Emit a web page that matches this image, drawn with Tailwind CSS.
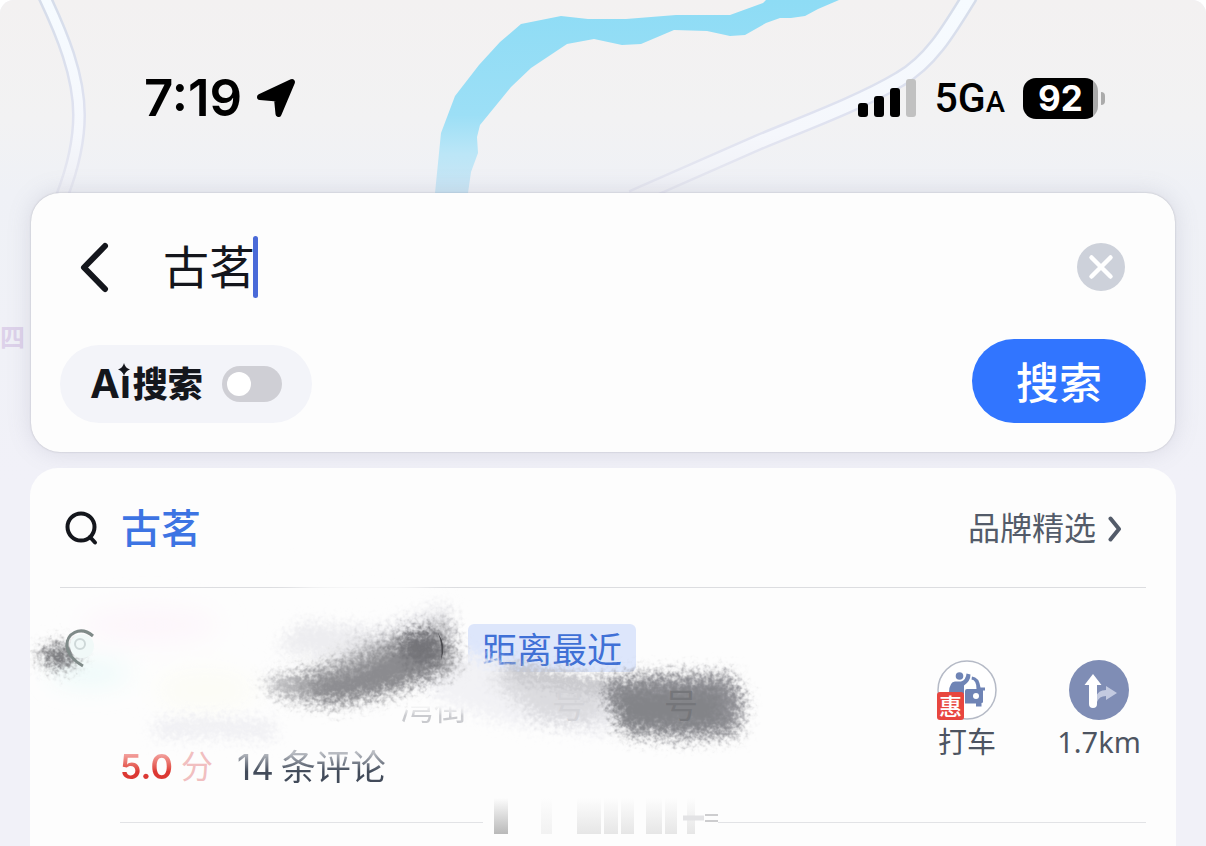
<!DOCTYPE html>
<html lang="zh-CN">
<head>
  <meta charset="UTF-8" />
  <meta name="viewport" content="width=device-width, initial-scale=1" />
  <title>古茗 - 搜索</title>
  <script src="https://cdn.jsdelivr.net/npm/@tailwindcss/browser@4"></script>
</head>
<body class="bg-white font-['Inter','Noto_Sans_CJK_SC',sans-serif] text-[#14161c]">

  <div class="relative isolate flex h-screen flex-col overflow-hidden rounded-t-[14px] bg-[#f1f1f8]">

    <!-- 背景地图 -->
    <svg class="absolute inset-x-0 top-0 -z-10 h-[480px] w-full" viewBox="0 0 1206 480" preserveAspectRatio="xMidYMin slice" aria-hidden="true">
      <defs>
        <linearGradient id="land" x1="0" y1="0" x2="0" y2="1">
          <stop offset="0" stop-color="#f3f1f1" />
          <stop offset="0.25" stop-color="#f2f2f3" />
          <stop offset="0.4" stop-color="#eff1f6" />
          <stop offset="1" stop-color="#f1f1f8" />
        </linearGradient>
        <linearGradient id="river" gradientUnits="userSpaceOnUse" x1="0" y1="0" x2="0" y2="192">
          <stop offset="0" stop-color="#8edcf5" />
          <stop offset="0.6" stop-color="#9cdff6" />
          <stop offset="0.8" stop-color="#bbe6f7" />
          <stop offset="1" stop-color="#cbe5f4" />
        </linearGradient>
        <linearGradient id="roadEdge" gradientUnits="userSpaceOnUse" x1="0" y1="0" x2="0" y2="192">
          <stop offset="0" stop-color="#d6ddea" />
          <stop offset="0.6" stop-color="#dfe2f0" />
          <stop offset="1" stop-color="#e6e7f0" />
        </linearGradient>
        <linearGradient id="road" gradientUnits="userSpaceOnUse" x1="0" y1="0" x2="0" y2="192">
          <stop offset="0" stop-color="#f6fbff" />
          <stop offset="0.7" stop-color="#f5f7fc" />
          <stop offset="1" stop-color="#eff0f5" />
        </linearGradient>
      </defs>
      <rect width="1206" height="480" fill="url(#land)" />
      <g fill="none">
        <path d="M44-4C62 34 79 75 79 115C79 145 72 170 62 196" stroke="url(#roadEdge)" stroke-width="14" />
        <path d="M44-4C62 34 79 75 79 115C79 145 72 170 62 196" stroke="url(#road)" stroke-width="9" />
        <path d="M970-4C948 32 930 62 900 79C860 103 800 125 757 143L632 198" stroke="url(#roadEdge)" stroke-width="17" />
        <path d="M970-4C948 32 930 62 900 79C860 103 800 125 757 143L632 198" stroke="url(#road)" stroke-width="12" />
      </g>
      <path fill="url(#river)" d="M435 193L441 133L455 96L479 65L500 42L521 24L561 16L588 19L626 19L676 15L730 15L763 3L766 0H839L818 9L805 16L791 18L780 18L766 23L745 35L730 36L707 31L674 30L641 44L622 45L594 39L567 44L531 68L511 87L480 125L477 137L478 153L471 172L468 193Z" />
    </svg>
    <span class="absolute top-[322px] left-0 -z-10 text-[25px] leading-8 font-bold text-[#ddd2ea]">四</span>

    <!-- 状态栏 -->
    <header class="flex h-[193px] shrink-0 items-center justify-between pt-[3px] pr-[101px] pl-[144px] text-black">
      <div class="flex items-center gap-[14px]">
        <span class="text-[51px] leading-[50px] font-semibold">7:19</span>
        <svg class="h-10 w-10" viewBox="0 0 40 40" aria-hidden="true">
          <path d="M36 4L22.500 36L21 20.500L4 19Z" fill="#000" stroke="#000" stroke-width="6" stroke-linejoin="round" />
        </svg>
      </div>
      <div class="flex items-center gap-[18px]">
        <svg class="h-[38px] w-[59px]" viewBox="0 0 59 38" aria-hidden="true">
          <rect x="0" y="24" width="10" height="14" rx="3" />
          <rect x="16" y="17" width="10" height="21" rx="3" />
          <rect x="32" y="9" width="10" height="29" rx="3" />
          <rect x="48" y="0" width="10" height="38" rx="3" fill="#c1c1c1" />
        </svg>
        <span class="pt-1 font-[Roboto] text-[41px] leading-[42px] font-medium">5G<span class="text-[29px]">A</span></span>
        <div class="flex items-center gap-[3px]">
          <div class="flex h-[41px] w-[75px] items-center justify-center rounded-[13px] bg-linear-to-r from-black from-93% to-[#a9a9a9] to-93% text-[35px] leading-[41px] font-bold text-white">92</div>
          <div class="h-[13px] w-1 rounded-r-full bg-[#ababab]"></div>
        </div>
      </div>
    </header>

    <!-- 搜索框 -->
    <form class="mx-[31px] shrink-0 rounded-[29px] bg-[#fdfdfd] pr-[29px] pb-[29px] pl-[29px] shadow-[0_0_2px_rgba(90,90,110,0.35),0_0_24px_rgba(110,110,140,0.18)]" onsubmit="return false">
      <div class="flex h-[146px] items-center pt-px pr-[21px] pl-[19px]">
        <button type="button" aria-label="返回" class="mr-[54px]">
          <svg class="h-[52px] w-[30px]" viewBox="0 0 30 52" fill="none" stroke="#14161c" stroke-width="6" stroke-linecap="round" stroke-linejoin="round">
            <path d="M26 5L5 26.500L26 48" />
          </svg>
        </button>
        <input type="text" value="古茗" aria-label="搜索地点" class="field-sizing-content w-auto bg-transparent p-0 text-[46px] leading-[60px] outline-none" />
        <span class="-ml-[2px] h-[62px] w-[5px] rounded-full bg-[#4a6ad8]"></span>
        <button type="reset" aria-label="清除" class="ml-auto">
          <svg class="h-12 w-12" viewBox="0 0 48 48">
            <circle cx="24" cy="24" r="24" fill="#cdd1da" />
            <path d="M14.500 14.500L33.500 33.500M33.500 14.500L14.500 33.500" stroke="#fff" stroke-width="4.500" stroke-linecap="round" />
          </svg>
        </button>
      </div>
      <div class="flex items-end justify-between">
        <label class="flex h-[78px] w-[252px] items-center rounded-full bg-[#f3f4f9] pl-[30px]">
          <span class="relative text-[40px] leading-[40px] font-bold">Ai
            <svg class="absolute -top-[2px] left-[27px] h-[14px] w-[14px] bg-[#f3f4f9]" viewBox="0 0 14 14" aria-hidden="true">
              <path d="M7 1Q8.200 6 13 7.500Q8.200 9 7 14Q5.800 9 1 7.500Q5.800 6 7 1Z" fill="#14161c" />
            </svg>
          </span>
          <span class="ml-[2px] text-[35px] leading-[40px] font-black">搜索</span>
          <input type="checkbox" class="ml-[19px] h-9 w-[60px] shrink-0 appearance-none rounded-full bg-[#cfcfd5] before:mt-[6px] before:ml-[5px] before:block before:h-6 before:w-6 before:rounded-full before:bg-white" />
        </label>
        <button type="submit" class="h-[84px] w-[174px] rounded-full bg-[#3175ff] pt-1 text-[43px] leading-[60px] font-medium text-white">搜索</button>
      </div>
    </form>

    <!-- 搜索结果 -->
    <main class="mx-[30px] mt-4 grow rounded-t-[28px] bg-[#fdfdfd] px-[30px]">
      <div class="flex h-[120px] items-center justify-between border-b border-[#dcdde0] pt-[2px] pr-[24px] pl-[5px]">
        <h1 class="flex items-center gap-[22px] text-[40px] leading-[52px] font-medium text-[#3d74e3]">
          <svg class="h-[36px] w-[34px]" viewBox="0 0 34 36" fill="none" stroke="#14161c" stroke-width="4" stroke-linecap="round" aria-hidden="true">
            <circle cx="16" cy="16" r="13.500" />
            <path d="M25 26L30 31.500" />
          </svg>
          古茗
        </h1>
        <a href="#" class="flex items-center gap-[12px] text-[32px] leading-[44px] text-[#535b69]">
          品牌精选
          <svg class="h-[26px] w-[14px]" viewBox="0 0 14 26" fill="none" stroke="#535b69" stroke-width="4" stroke-linejoin="round" stroke-linecap="round" aria-hidden="true">
            <path d="M2.500 2.500L11 13L2.500 23.500" />
          </svg>
        </a>
      </div>

      <article class="relative ml-[60px] flex h-[235px] items-start justify-between border-b border-[#e2e3e6]">
        <div class="pt-9">
          <div class="ml-[348px] h-12 w-[168px] rounded-[6px] bg-[#dde6fb] pt-[2px] text-center text-[35px] leading-12 text-[#3f70d6]">距离最近</div>
          <p class="mt-4 pl-[280px] text-[34px] leading-[40px]"><span class="bg-linear-to-b from-transparent from-45% to-[#c9cace] to-70% bg-clip-text text-transparent">湾街</span></p>
          <p class="mt-4 flex items-center text-[35px] leading-[46px]">
            <span class="bg-linear-to-b from-[#f3a5a3] from-20% to-[#dc3833] to-60% bg-clip-text text-[34px] font-semibold text-transparent">5.0</span>
            <span class="ml-2 text-[32px] text-[#f1bfc0]">分</span>
            <span class="ml-6 bg-linear-to-b from-[#b9bcc2] from-20% to-[#424b5a] to-60% bg-clip-text text-transparent">14</span>
            <span class="ml-[7px] bg-linear-to-b from-[#b9bcc2] from-20% to-[#424b5a] to-60% bg-clip-text text-transparent">条评论</span>
          </p>
        </div>

        <div class="relative z-10 flex gap-[52px] pt-[72px] pr-[7px] text-[29px] leading-[44px] text-[#4d5461]">
          <button type="button" class="flex w-[80px] flex-col items-center">
            <svg class="h-[60px] w-[60px]" viewBox="0 0 60 60" aria-hidden="true">
              <circle cx="30" cy="30" r="29" fill="#fff" stroke="#b5bac6" stroke-width="1.500" />
              <g fill="#6f84b5">
                <circle cx="22.500" cy="16" r="3.800" />
                <path d="M12 32Q12.500 22 18 21.500H24Q29 20 29.500 13.500L33.500 14.500Q33.500 21 27 25.500V34H12Z" />
                <path d="M28 31Q28 29 30 29H39.500Q39.500 20 34.500 19.500L35 16.500Q42 17 43.500 27.500H48V30.500H46V42Q46 43 44.500 43V46.500H39V43.500H28Z" />
              </g>
              <circle cx="39" cy="36" r="3" fill="#fff" />
              <rect x="0" y="32" width="27" height="28" rx="3" fill="#e8463f" />
              <text x="13.500" y="55" text-anchor="middle" font-size="23" font-weight="500" fill="#fff">惠</text>
            </svg>
            <span class="pt-px">打车</span>
          </button>
          <button type="button" class="flex w-[80px] flex-col items-center">
            <svg class="h-[60px] w-[60px]" viewBox="0 0 60 60" aria-hidden="true">
              <circle cx="30" cy="30" r="30" fill="#7f8db5" />
              <path d="M27 44V37Q29 30 37 30V26L48 33L37 40V36Q30 36 28 42Z" fill="#c3cae0" />
              <path d="M24 14L32.500 25H28V44A4 4 0 0 1 20 44V25H15.500Z" fill="#fff" />
            </svg>
            <span class="font-['Noto_Sans',sans-serif] text-[29px]">1.7km</span>
          </button>
        </div>

        <!-- 店名和地址上的涂抹 -->
        <svg class="pointer-events-none absolute -top-[40px] -left-[90px] h-[298px] w-[760px]" viewBox="30 548 760 298" aria-hidden="true">
          <defs>
            <filter id="rough" x="-20%" y="-40%" width="140%" height="180%">
              <feGaussianBlur stdDeviation="7" result="b" />
              <feTurbulence type="fractalNoise" baseFrequency="0.22" numOctaves="2" seed="4" />
              <feDisplacementMap in="b" scale="26" xChannelSelector="R" yChannelSelector="G" />
            </filter>
            <filter id="soft" x="-30%" y="-80%" width="160%" height="260%">
              <feGaussianBlur stdDeviation="13" />
            </filter>
            <linearGradient id="down" x1="0" y1="0" x2="0" y2="1">
              <stop offset="0" stop-color="#fdfdfd" />
              <stop offset="1" stop-color="#b9b9b9" />
            </linearGradient>
            <linearGradient id="downSoft" x1="0" y1="0" x2="0" y2="1">
              <stop offset="0" stop-color="#fdfdfd" />
              <stop offset="1" stop-color="#e6e6e6" />
            </linearGradient>
          </defs>
          <ellipse cx="362" cy="587" rx="70" ry="16" fill="#fdfdfd" filter="url(#soft)" />
          <g filter="url(#soft)">
            <ellipse cx="150" cy="625" rx="70" ry="18" fill="#fdf6fb" />
            <ellipse cx="90" cy="673" rx="40" ry="12" fill="#ebfaf9" />
            <ellipse cx="205" cy="690" rx="50" ry="20" fill="#fcfcf5" />
          </g>
          <g filter="url(#rough)">
            <path d="M155 730Q200 724 275 731" fill="none" stroke="#efeff3" stroke-width="18" />
            <path d="M275 650L300 622L380 628L445 602L458 640L400 670Z" fill="#ededf0" />
            <path d="M345 640L400 634L452 612V650L380 660Z" fill="#dddde0" />
            <path d="M400 664L465 652L570 684L630 690L610 735L500 722L440 700Z" fill="#f2f2f5" />
            <path d="M485 676L600 684V724L540 720Z" fill="#dbdbdf" />
            <path d="M505 669L600 686" stroke="#aaaab0" stroke-width="9" />
          </g>
          <g filter="url(#rough)">
            <path d="M262 682L310 670L390 638L447 624L458 668L390 694L340 706L285 698Z" fill="#b0b0b3" />
            <path d="M300 684L350 670L400 645L448 645L444 672L380 694L320 702Z" fill="#8b8b8f" />
            <ellipse cx="422" cy="647" rx="24" ry="17" fill="#737378" />
            <path d="M598 680L650 675H730L744 700L738 734L690 738L625 734L608 705Z" fill="#919196" />
            <path d="M614 690H722V726H622Z" fill="#838488" />
            <ellipse cx="59" cy="656" rx="18" ry="10" fill="#66666a" />
          </g>
          <path d="M438 633Q447 646 441 660Q443 645 438 633Z" fill="#4c4c50" />
          <circle cx="82" cy="646" r="12" fill="#f1f9f8" />
          <path d="M93 636C80 625 66 634 67 646C68 656 76 662 83 666" fill="none" stroke="#7f8a88" stroke-width="3" />
          <circle cx="80" cy="644" r="5" fill="none" stroke="#ced8d8" stroke-width="2" />
          <text x="664" y="718" font-size="34" fill="#75767a">号</text>
          <text x="552" y="718" font-size="34" fill="#d3d3d7">号</text>
          <path d="M483 822H718" stroke="#fdfdfd" stroke-width="3" />
          <rect x="494" y="798" width="14" height="36" fill="url(#down)" />
          <rect x="541" y="798" width="11" height="36" fill="url(#downSoft)" opacity="0.5" />
          <g fill="url(#downSoft)">
            <rect x="577" y="798" width="24" height="36" />
            <rect x="604" y="798" width="14" height="36" />
            <rect x="621" y="798" width="13" height="36" />
            <rect x="646" y="798" width="16" height="36" />
            <rect x="665" y="798" width="12" height="36" />
            <rect x="687" y="798" width="8" height="36" />
          </g>
          <path d="M683 818H704" stroke="#e3e3e5" stroke-width="5" />
          <path d="M705 815H718M705 821H718" stroke="#bdbdc0" stroke-width="1.500" />
        </svg>
      </article>
    </main>
  </div>

</body>
</html>
